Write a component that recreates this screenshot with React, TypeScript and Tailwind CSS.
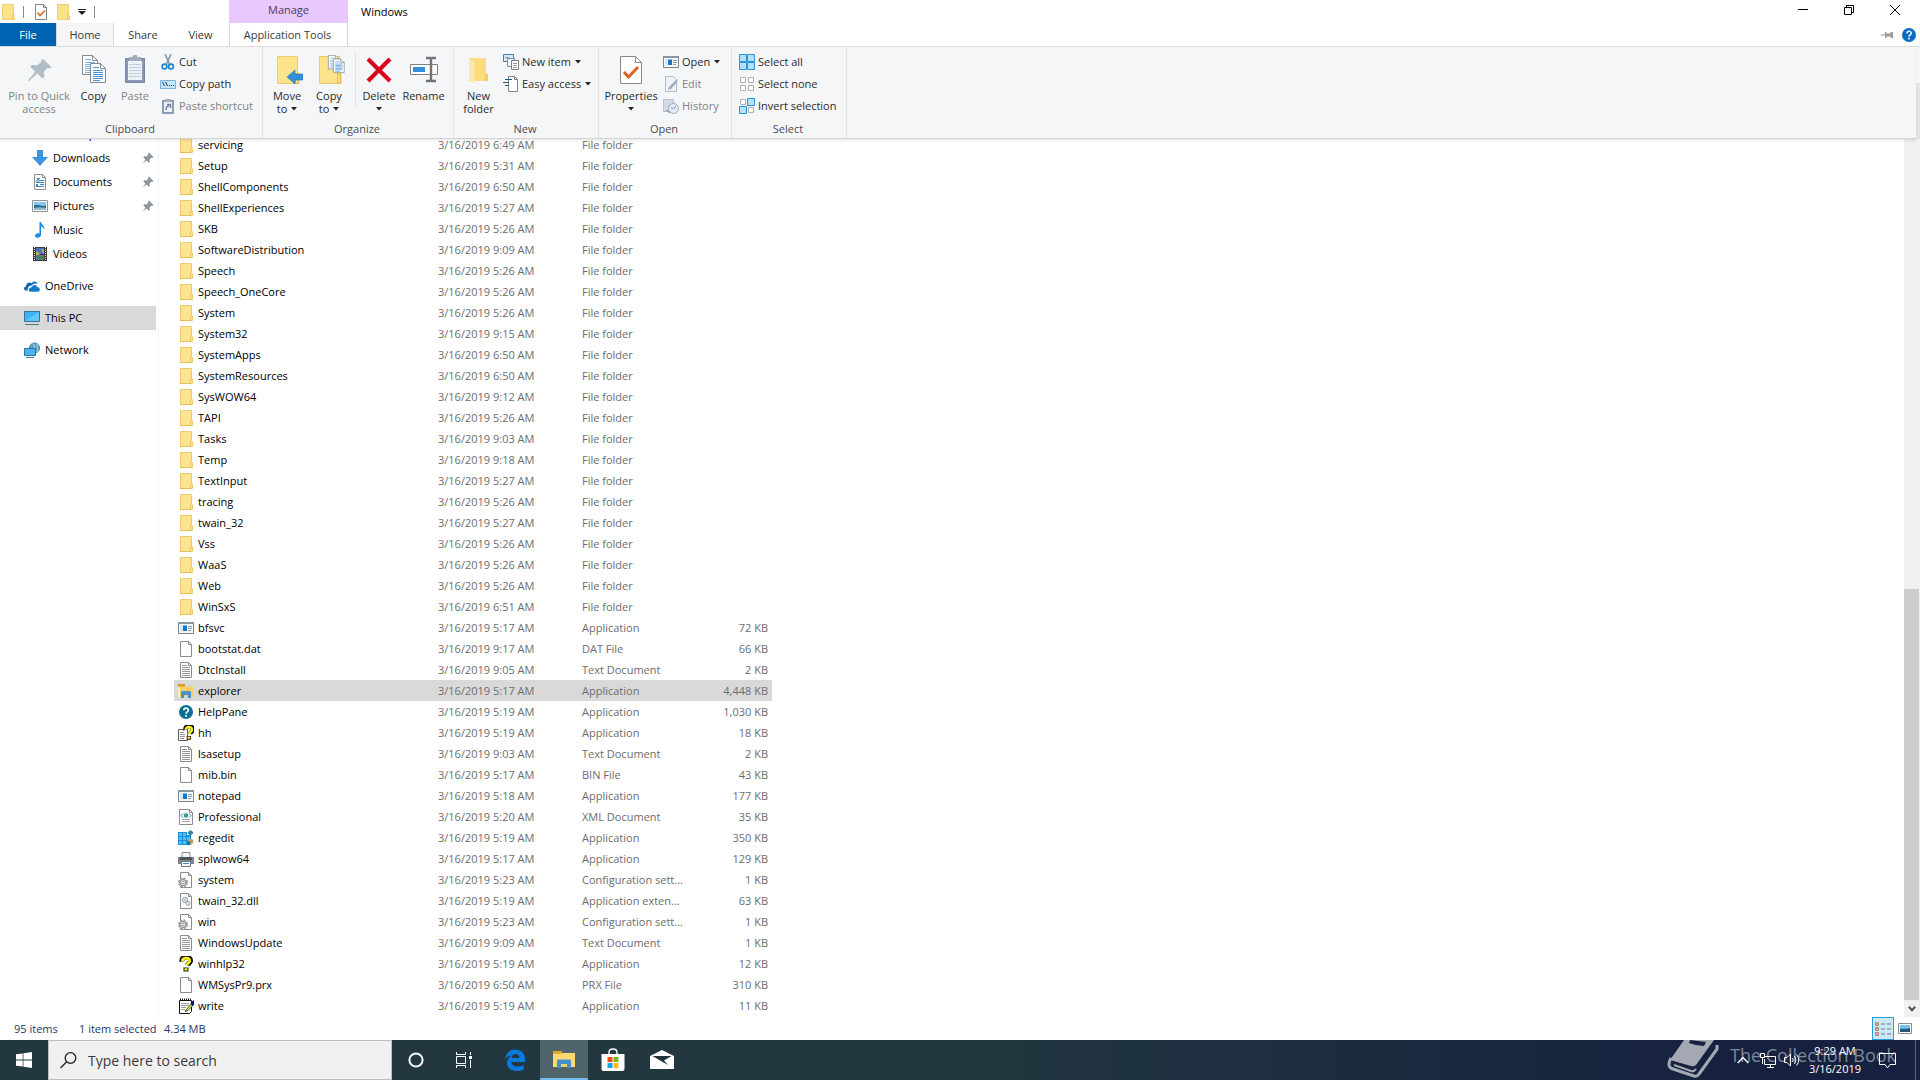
import type { ReactNode } from "react";
import clsx from "clsx";

type IconName =
  | "folder"
  | "app"
  | "blank"
  | "text"
  | "explorer"
  | "help"
  | "hh"
  | "xml"
  | "regedit"
  | "printer"
  | "config"
  | "dll"
  | "winhlp"
  | "write";

interface FileEntry {
  name: string;
  time: string;
  type: string;
  size?: string;
  icon: IconName;
  selected?: boolean;
}

const folder = (name: string, time: string): FileEntry => ({
  name,
  time,
  type: "File folder",
  icon: "folder",
});

const files: FileEntry[] = [
  folder("servicing", "6:49"),
  folder("Setup", "5:31"),
  folder("ShellComponents", "6:50"),
  folder("ShellExperiences", "5:27"),
  folder("SKB", "5:26"),
  folder("SoftwareDistribution", "9:09"),
  folder("Speech", "5:26"),
  folder("Speech_OneCore", "5:26"),
  folder("System", "5:26"),
  folder("System32", "9:15"),
  folder("SystemApps", "6:50"),
  folder("SystemResources", "6:50"),
  folder("SysWOW64", "9:12"),
  folder("TAPI", "5:26"),
  folder("Tasks", "9:03"),
  folder("Temp", "9:18"),
  folder("TextInput", "5:27"),
  folder("tracing", "5:26"),
  folder("twain_32", "5:27"),
  folder("Vss", "5:26"),
  folder("WaaS", "5:26"),
  folder("Web", "5:26"),
  folder("WinSxS", "6:51"),
  { name: "bfsvc", time: "5:17", type: "Application", size: "72 KB", icon: "app" },
  { name: "bootstat.dat", time: "9:17", type: "DAT File", size: "66 KB", icon: "blank" },
  { name: "DtcInstall", time: "9:05", type: "Text Document", size: "2 KB", icon: "text" },
  { name: "explorer", time: "5:17", type: "Application", size: "4,448 KB", icon: "explorer", selected: true },
  { name: "HelpPane", time: "5:19", type: "Application", size: "1,030 KB", icon: "help" },
  { name: "hh", time: "5:19", type: "Application", size: "18 KB", icon: "hh" },
  { name: "lsasetup", time: "9:03", type: "Text Document", size: "2 KB", icon: "text" },
  { name: "mib.bin", time: "5:17", type: "BIN File", size: "43 KB", icon: "blank" },
  { name: "notepad", time: "5:18", type: "Application", size: "177 KB", icon: "app" },
  { name: "Professional", time: "5:20", type: "XML Document", size: "35 KB", icon: "xml" },
  { name: "regedit", time: "5:19", type: "Application", size: "350 KB", icon: "regedit" },
  { name: "splwow64", time: "5:17", type: "Application", size: "129 KB", icon: "printer" },
  { name: "system", time: "5:23", type: "Configuration sett...", size: "1 KB", icon: "config" },
  { name: "twain_32.dll", time: "5:19", type: "Application exten...", size: "63 KB", icon: "dll" },
  { name: "win", time: "5:23", type: "Configuration sett...", size: "1 KB", icon: "config" },
  { name: "WindowsUpdate", time: "9:09", type: "Text Document", size: "1 KB", icon: "text" },
  { name: "winhlp32", time: "5:19", type: "Application", size: "12 KB", icon: "winhlp" },
  { name: "WMSysPr9.prx", time: "6:50", type: "PRX File", size: "310 KB", icon: "blank" },
  { name: "write", time: "5:19", type: "Application", size: "11 KB", icon: "write" },
];

const Svg = ({ size = 16, children }: { size?: number; children: ReactNode }) => (
  <svg
    width={size}
    height={size}
    viewBox={`0 0 ${size} ${size}`}
    fill="none"
    className="block shrink-0"
    aria-hidden="true"
  >
    {children}
  </svg>
);

/* ---------- file icons ---------- */

const PagePaths = () => (
  <>
    <path d="M2.5.5h8l3 3v12h-11z" fill="#fdfdfd" stroke="#8c8c8c" />
    <path d="M10.500.5v3h3" stroke="#8c8c8c" />
  </>
);

const GearPaths = ({ x, y }: { x: number; y: number }) => (
  <g transform={`translate(${x} ${y})`}>
    <circle r="4" stroke="#9b9b9b" strokeWidth="2" strokeDasharray="2 1.14" fill="#ececec" />
    <circle r="3" stroke="#8a8a8a" fill="#e6e6e6" />
    <circle r="1.2" fill="#fff" stroke="#8a8a8a" strokeWidth=".7" />
  </g>
);

const QuestionPaths = () => (
  <>
    <path
      d="M4 5.500C3.500 2.500 5.500 1.200 8.200 1.200c3 0 4.600 1.500 4.300 3.900-.2 2-2.500 2.300-3 4.200"
      stroke="#111"
      strokeWidth="5"
    />
    <path d="M5.500 11.500h5v4h-5z" fill="#111" />
    <path
      d="M4.400 5.200C4.200 3.200 5.800 2.200 8.200 2.200c2.400 0 3.700 1 3.500 2.900-.2 1.900-2.900 2-3.200 4.600"
      stroke="#f7ef1c"
      strokeWidth="2.800"
    />
    <path d="M6.500 12.200h3v2.400h-3z" fill="#f7ef1c" />
  </>
);

const FileIcon = ({ name }: { name: IconName }) => {
  switch (name) {
    case "folder":
      return (
        <Svg>
          <path d="M2.500.5h11V10l1 1v4.500h-12z" fill="#fde492" stroke="#eccb6c" />
          <path d="M12.500 15v-4.500l1-1" stroke="#e9c560" />
          <path d="M2 15.500h12" stroke="#e8c053" />
        </Svg>
      );
    case "app":
      return (
        <Svg>
          <path d="M.5 2.500h15v11H.5z" fill="#f7fafc" stroke="#7b868e" />
          <path d="M0 2h16v2H0z" fill="#8b959c" />
          <path d="M2 5h2.500v7H2z" fill="#d5e6f2" />
          <path d="M5 5.500h4v5.500H5z" fill="#1675c4" />
          <path d="M10 6.500h4M10 8.500h4M10 10.500h3" stroke="#8e9aa2" />
        </Svg>
      );
    case "blank":
      return (
        <Svg>
          <PagePaths />
        </Svg>
      );
    case "text":
      return (
        <Svg>
          <PagePaths />
          <path d="M4 3.500h5M4 5.500h8M4 7.500h8M4 9.500h8M4 11.500h8M4 13.500h8" stroke="#979797" />
        </Svg>
      );
    case "explorer":
      return (
        <Svg>
          <path d="M1 2h6l1 1.500h7.500V14H1z" fill="#f9d065" />
          <path d="M0 1h7v2.500H0z" fill="#e19a1b" />
          <path d="M3 15V9.500Q3 8 4.500 8h7Q13 8 13 9.500V15h-3v-3H6v3z" fill="#4a93c9" />
          <path d="M0 4.500h2V14H0z" fill="#fff0c0" />
        </Svg>
      );
    case "help":
      return (
        <Svg>
          <circle cx="8" cy="8" r="7" fill="#0f6f91" />
          <path d="M5.800 6.300c0-3 4.600-3 4.600-.2C10.400 8 8 7.800 8 9.800" stroke="#fff" strokeWidth="1.600" />
          <path d="M7.200 11h1.700v1.700H7.200z" fill="#fff" />
        </Svg>
      );
    case "hh":
      return (
        <Svg>
          <path d="M.5 4.500h9v11h-9z" fill="#fff" stroke="#5b5b5b" />
          <path d="M2 7.500h4M2 9.500h5M2 11.500h5M2 13.500h4" stroke="#999" />
          <g transform="translate(4 0) scale(.85 .95)">
            <QuestionPaths />
          </g>
        </Svg>
      );
    case "xml":
      return (
        <Svg>
          <path d="M1.500.5h10l3 3v12h-13z" fill="#fdfdfd" stroke="#8c8c8c" />
          <path d="M11.500.5v3h3" stroke="#8c8c8c" />
          <path d="M5 4.500 3 6.500l2 2M11 4.500l2 2-2 2" stroke="#3f7fa8" />
          <circle cx="8" cy="6.500" r="2.200" fill="#2f9e9b" />
          <path d="M4 10.500h8M4 12.500h8" stroke="#a5a5a5" />
        </Svg>
      );
    case "regedit":
      return (
        <Svg>
          <path d="M0 2h9v3h4v10H0z" fill="#1b8fd6" />
          <path d="M1 3h3v3H1zM1 7h3v3H1zM1 11h3v3H1zM5 3h3v3H5zM5 7h3v3H5zM5 11h3v3H5zM9 7h3v3H9z" fill="#4fc0f2" />
          <path d="m12.500.5 2.700 2.200-2.700 2.600-2.700-2.600z" fill="#2e83b4" stroke="#1b6fa0" strokeWidth=".7" />
          <circle cx="12.500" cy="11.500" r="2.800" fill="#b99b60" />
          <path d="M9 11.500h3V15H9z" fill="#1472b1" />
        </Svg>
      );
    case "printer":
      return (
        <Svg>
          <path d="M4 1.500h8v5H4z" fill="#f4f6f7" stroke="#8a9196" />
          <path d="M0 6h16v7H0z" fill="#7d858b" />
          <path d="M2 6h12v3H2z" fill="#4f575d" />
          <path d="M3.500 10.500h9v5h-9z" fill="#f5f8fa" stroke="#737b80" />
          <path d="M5 12.500h6" stroke="#3c90cd" />
        </Svg>
      );
    case "config":
      return (
        <Svg>
          <PagePaths />
          <GearPaths x={5} y={10.5} />
        </Svg>
      );
    case "dll":
      return (
        <Svg>
          <PagePaths />
          <circle cx="7" cy="7" r="2.600" stroke="#96a3aa" fill="#e4eaed" />
          <circle cx="7" cy="7" r=".8" fill="#96a3aa" />
          <circle cx="10" cy="10.500" r="2" stroke="#96a3aa" fill="#e4eaed" />
        </Svg>
      );
    case "winhlp":
      return (
        <Svg>
          <QuestionPaths />
        </Svg>
      );
    case "write":
      return (
        <Svg>
          <path d="M1.500 2.500h12v11l-2 2h-10z" fill="#fff" stroke="#111" />
          <path d="M2 1.500h12" stroke="#111" strokeWidth="2" strokeDasharray="1 1" />
          <path d="M3 5.500h8M3 7.500h8M3 9.500h5M3 11.500h4" stroke="#9a9a9a" />
          <path d="m8 12 5-6 2 1.500-5 5-3 1z" fill="#efe53c" stroke="#111" strokeWidth=".7" />
          <path d="M12.500 4.500 16 2v5l-2 1z" fill="#14107c" />
        </Svg>
      );
  }
};

/* ---------- navigation icons ---------- */

const PinIcon = () => (
  <svg width="12" height="12" viewBox="0 0 12 12" className="block shrink-0" aria-hidden="true">
    <path
      d="M7 .6 11.400 5l-1 .9-.8-.3-2 2 .2 2.200-1.100 1L4.500 8.600.6 11.500 3.400 7.500 1.200 5.300l1-1.100 2.200.2 2-2-.3-.8z"
      fill="#8d979e"
    />
  </svg>
);

const navIcons: Record<string, ReactNode> = {
  Desktop: (
    <Svg>
      <path d="M0 2h16v11H0z" fill="#1f8dd6" />
    </Svg>
  ),
  Downloads: (
    <Svg>
      <path d="M5 0h6v7h5l-8 9-8-9h5z" fill="#3b94dd" />
    </Svg>
  ),
  Documents: (
    <Svg>
      <PagePaths />
      <path d="M5 4.500h3M7 6.500h5M4 8.500h8M4 10.500h2M8 10.500h4M4 12.500h8" stroke="#3583bd" />
      <path d="M4 7.500 6 5v3M4 11.500h2" stroke="#3583bd" />
    </Svg>
  ),
  Pictures: (
    <Svg>
      <path d="M.5 2.500h15v11H.5z" fill="#fff" stroke="#8c979d" />
      <path d="M2 4h12v8H2z" fill="#86c8ee" />
      <path d="M2 7.500c3-1.500 5 1 12 0V12H2z" fill="#2c6a8c" />
      <path d="M2 10c4-1.500 8-.5 12 0v2H2z" fill="#8fb9cc" />
    </Svg>
  ),
  Music: (
    <Svg>
      <path
        d="M7.500 0h1.500c.5 3 4 3.500 3.500 8-.5-2-1.500-3-3.500-3.500V13c0 3-5.500 4-6 1-.2-2 2-3.200 4.500-2.600z"
        fill="#1b8ce0"
      />
    </Svg>
  ),
  Videos: (
    <Svg>
      <path d="M1 1h14v14H1z" fill="#3a3a3a" />
      <path d="M2.500 1v14M13.500 1v14" stroke="#e5e5e5" strokeDasharray="1 1" />
      <path d="M4 2h8v6H4z" fill="#4b78b8" />
      <path d="M4 5l4 3-4 2zM9 3l3 1v4z" fill="#d8b53c" />
      <path d="M4 9h8v5H4z" fill="#6a6fae" />
      <path d="M6 10h5v3H6z" fill="#2f8b52" />
    </Svg>
  ),
  OneDrive: (
    <Svg>
      <path
        d="M3.800 12.500H1.700C-.8 12.100-.4 8.500 2 8.400 2 5.200 5.500 3.500 7.800 5.300 9.500 2.500 13 3.500 13.400 6 10.500 4.800 8.500 6 8 7.600 5 7.500 3.300 9.700 3.800 12.500z"
        fill="#0f65b8"
      />
      <path d="M6.300 13.800C4 13.300 4.200 9.300 7.800 9.200 8.500 6.300 12.500 6.200 13.200 9c3.200.2 3.500 4.200.8 4.800z" fill="#1379cf" />
    </Svg>
  ),
  "This PC": (
    <Svg>
      <path d="M.5 1.500h15v10H.5z" fill="#3db1f5" stroke="#38738f" />
      <path d="m1 11 14-9v9z" fill="#63c6fb" />
      <path d="M1 14.500h14" stroke="#50788c" />
    </Svg>
  ),
  Network: (
    <Svg>
      <circle cx="10.500" cy="6" r="5" fill="#5fa5c8" stroke="#3f7fa2" />
      <path d="M9 1.500c2 2 2 3 1 5M13 2c1 3 1 5 0 8" stroke="#a9d3e8" />
      <path d="M.5 6.500h11v7H.5z" fill="#49b4ef" stroke="#2c739b" />
      <path d="M2 15.500h8" stroke="#4f7d96" />
    </Svg>
  ),
};

interface NavItem {
  label: string;
  pinned?: boolean;
  current?: boolean;
}

const quickAccess: NavItem[] = [
  { label: "Desktop", pinned: true },
  { label: "Downloads", pinned: true },
  { label: "Documents", pinned: true },
  { label: "Pictures", pinned: true },
  { label: "Music" },
  { label: "Videos" },
];

const roots: NavItem[] = [{ label: "OneDrive" }, { label: "This PC", current: true }, { label: "Network" }];

const NavLink = ({ item, nested }: { item: NavItem; nested?: boolean }) => (
  <a
    href={`#${item.label.replace(" ", "-")}`}
    aria-current={item.current ? "page" : undefined}
    className={clsx(
      "flex h-6 items-center gap-[5px] pr-[2px]",
      nested ? "pl-8" : "pl-6",
      item.current && "bg-[#d9d9d9]"
    )}
  >
    {navIcons[item.label]}
    <span className="flex-1">{item.label}</span>
    {item.pinned && <PinIcon />}
  </a>
);

/* ---------- ribbon ---------- */

const Caret = () => (
  <svg width="6" height="4" viewBox="0 0 6 4" className="block shrink-0" aria-hidden="true">
    <path d="M0 0h6L3 3.500z" fill="#222" />
  </svg>
);

const LargeButton = ({
  icon,
  lines,
  caret,
  disabled,
  width,
}: {
  icon: ReactNode;
  lines: string[];
  caret?: boolean;
  disabled?: boolean;
  width: string;
}) => (
  <button
    type="button"
    disabled={disabled}
    className={clsx(
      "flex shrink-0 flex-col items-center pt-1 leading-[13px]",
      width,
      disabled ? "text-[#7f8387]" : "text-[#2b2b2b]"
    )}
  >
    {icon}
    <span className="mt-[2px] whitespace-nowrap">{lines[0]}</span>
    <span className="flex h-[13px] items-center gap-1 whitespace-nowrap">
      {lines[1]}
      {caret && <Caret />}
    </span>
  </button>
);

const SmallButton = ({
  icon,
  label,
  caret,
  disabled,
}: {
  icon: ReactNode;
  label: string;
  caret?: boolean;
  disabled?: boolean;
}) => (
  <button
    type="button"
    disabled={disabled}
    className={clsx(
      "flex h-[22px] items-center gap-[3px] whitespace-nowrap",
      disabled ? "text-[#7f8387]" : "text-[#2b2b2b]"
    )}
  >
    {icon}
    <span>{label}</span>
    {caret && (
      <span className="pl-px">
        <Caret />
      </span>
    )}
  </button>
);

const Group = ({ label, width, children }: { label: string; width: string; children: ReactNode }) => (
  <section
    aria-label={label}
    className={clsx("flex h-[91px] shrink-0 flex-col border-r border-[#e2e3e4] pt-1", width)}
  >
    <div className="flex h-[68px]">{children}</div>
    <div className="pr-[2px] text-center leading-[19px] text-[#4a4d50]">{label}</div>
  </section>
);

const BigPage = ({ x, y, color }: { x: number; y: number; color: string }) => (
  <g transform={`translate(${x} ${y})`}>
    <path d="M.5.5h10l5 5v14H.5z" fill="#fff" stroke="#85898c" />
    <path d="M10.500.5v5h5" stroke="#85898c" />
    <path d="M3 4.500h6M3 7.500h10M3 9.500h10M3 11.500h10M3 13.500h10M3 15.500h10M3 17.500h7" stroke={color} />
  </g>
);

const BigFolder = () => (
  <>
    <path d="M6.500 1.500h20V18l1.500.5v10H6.500z" fill="#fde38c" stroke="#edcb66" />
    <path d="M24.500 18.500h3v10h-3z" fill="#fbdc78" stroke="#e2bc52" />
  </>
);

const Ribbon = () => (
  <div className="flex h-[93px] shrink-0 border-t border-[#dadbdc] bg-white">
    <div className="z-10 flex flex-1 border-b border-[#d2d3d4] bg-[#f5f6f7] shadow-[0_2px_2px_rgba(0,0,0,0.08)]">
      <Group label="Clipboard" width="w-[263px]">
        <div className="flex pl-1">
          <LargeButton
            width="w-[70px]"
            disabled
            lines={["Pin to Quick", "access"]}
            icon={
              <Svg size={32}>
                <path
                  d="m20 4 8.500 8-2 1.500-1.800-.8-4 4 .8 5-2.200 1.800-5-5L6 26l-1-.5 7.200-8.800-5-5 1.800-1.800 5 .4 4.600-3.600-.6-1.500z"
                  fill="#b1bdc7"
                />
              </Svg>
            }
          />
          <LargeButton
            width="w-[39px]"
            lines={["Copy"]}
            icon={
              <Svg size={32}>
                <BigPage x={4} y={0} color="#7fb3e0" />
                <BigPage x={12} y={8} color="#4a92d4" />
              </Svg>
            }
          />
          <LargeButton
            width="w-[44px]"
            disabled
            lines={["Paste"]}
            icon={
              <Svg size={32}>
                <path d="M6.500 3.500h19v24h-19z" fill="#8797b4" stroke="#7585a5" />
                <path d="M9 6h14v19H9z" fill="#eef1f6" />
                <path d="M10 9.500h12M10 12.500h12M10 15.500h12M10 18.500h12M10 21.500h12" stroke="#c3ccda" />
                <path d="M10 2h3.500c0-3 5-3 5 0H22v4H10z" fill="#a4aebb" />
              </Svg>
            }
          />
        </div>
        <div className="flex flex-col pl-[3px]">
          <SmallButton
            label="Cut"
            icon={
              <Svg>
                <path d="M5 0 9.500 10M11 0 6.500 10" stroke="#8296a6" strokeWidth="1.600" />
                <circle cx="4.500" cy="12.500" r="2.400" stroke="#1e84c9" strokeWidth="1.600" />
                <circle cx="11" cy="12.500" r="2.400" stroke="#1e84c9" strokeWidth="1.600" />
              </Svg>
            }
          />
          <SmallButton
            label="Copy path"
            icon={
              <Svg>
                <path d="M.5 4.500h15v8H.5z" fill="#c8e5f8" stroke="#7ab4dc" />
                <path d="m2.500 6 2 4M5.500 6l2 4" stroke="#173f66" />
                <path d="M9 9.500h1M11 9.500h1M13 9.500h1" stroke="#173f66" />
              </Svg>
            }
          />
          <SmallButton
            label="Paste shortcut"
            disabled
            icon={
              <Svg>
                <path d="M2 2h12v14H2z" fill="#8d9cb8" />
                <path d="M4 4h8v10H4z" fill="#eef1f6" />
                <path d="M5 1h6v3H5z" fill="#a4aebb" />
                <path d="M6 12c0-3 1-4 3-4M7 6.500h3.500V10" stroke="#6c7fa3" strokeWidth="1.400" />
              </Svg>
            }
          />
        </div>
      </Group>

      <Group label="Organize" width="w-[191px]">
        <div className="flex pl-[3px]">
          <LargeButton
            width="w-[42px]"
            lines={["Move", "to"]}
            caret
            icon={
              <Svg size={32}>
                <BigFolder />
                <path d="m16 22 8-7v4h8v6h-8v4z" fill="#338fdc" stroke="#2676ba" strokeWidth=".6" />
              </Svg>
            }
          />
          <LargeButton
            width="w-[42px]"
            lines={["Copy", "to"]}
            caret
            icon={
              <Svg size={32}>
                <BigFolder />
                <g transform="translate(15 0) scale(.72 .72)">
                  <BigPage x={0} y={0} color="#7fb3e0" />
                  <BigPage x={7} y={5} color="#4a92d4" />
                </g>
              </Svg>
            }
          />
        </div>
        <div className="ml-[5px] h-14 border-l border-[#e2e3e4]" />
        <LargeButton
          width="w-[46px]"
          lines={["Delete"]}
          caret
          icon={
            <Svg size={32}>
              <path d="M5 4 27 26M27 4 5 26" stroke="#d9071c" strokeWidth="4.200" />
            </Svg>
          }
        />
        <LargeButton
          width="w-[43px]"
          lines={["Rename"]}
          icon={
            <Svg size={32}>
              <path d="M2.500 9.500h27v10h-27z" fill="#fff" stroke="#7c8184" />
              <path d="M5 12h12v5H5z" fill="#2f8fdc" />
              <path d="M18 3h4l1 1 1-1h4M18 26h4l1-1 1 1h4M23 4v21" stroke="#6f7477" strokeWidth="2.400" />
            </Svg>
          }
        />
      </Group>

      <Group label="New" width="w-[145px]">
        <LargeButton
          width="w-[49px]"
          lines={["New", "folder"]}
          icon={
            <Svg size={32}>
              <path d="M6 3h17v23H6z" fill="#fbdc7e" />
              <path d="m6 3 5.500 4.500V29L6 24.500z" fill="#fdeaab" />
              <path d="M22 19h3v7h-3z" fill="#f4cd62" />
            </Svg>
          }
        />
        <div className="flex flex-col">
          <SmallButton
            label="New item"
            caret
            icon={
              <Svg>
                <path d="M.5.5h10v7H.5z" fill="#d7eaf8" stroke="#4b7fa8" />
                <path d="M4.500 4.500h7v8h-7z" fill="#f3f6f8" stroke="#6b90ae" />
                <path d="M8.500 6.500h7v9h-7z" fill="#fff" stroke="#7c8286" />
                <path d="M10 9.500h4M10 11.500h4M10 13.500h4M2 3.500h4" stroke="#8e979d" />
              </Svg>
            }
          />
          <SmallButton
            label="Easy access"
            caret
            icon={
              <Svg>
                <path d="M5.500.5h6l3 3v12h-9z" fill="#fff" stroke="#7f8487" />
                <path d="M11.500.5v3h3" stroke="#7f8487" />
                <path d="M2 3.500h7M0 6.500h6M2 9.500h4" stroke="#24567f" />
              </Svg>
            }
          />
        </div>
      </Group>

      <Group label="Open" width="w-[133px]">
        <LargeButton
          width="w-[64px]"
          lines={["Properties"]}
          caret
          icon={
            <Svg size={32}>
              <path d="M5.500 1.500h15l6 6v21h-21z" fill="#fff" stroke="#85898c" />
              <path d="M20.500 1.500v6h6" stroke="#85898c" />
              <path d="m9 17 4.500 5L23 12" stroke="#dd6423" strokeWidth="3" />
            </Svg>
          }
        />
        <div className="flex flex-col">
          <SmallButton label="Open" caret icon={<FileIcon name="app" />} />
          <SmallButton
            label="Edit"
            disabled
            icon={
              <Svg>
                <path d="M2.500.5h8l3 3v12h-11z" fill="#eef1f7" stroke="#b0b9cb" />
                <path d="m5 14 1-3 7.500-7.500 1.500 1.500L8 13z" fill="#9dabc6" />
              </Svg>
            }
          />
          <SmallButton
            label="History"
            disabled
            icon={
              <Svg>
                <path d="M.5 1.500h10v12H.5z" fill="#d3d9e6" stroke="#b9c2d4" />
                <circle cx="10.500" cy="10.500" r="5" fill="#e6eaf2" stroke="#9aa8c3" />
                <path d="M8 9.500 10.500 11 13 8M3 12l4 3" stroke="#8493b3" />
              </Svg>
            }
          />
        </div>
      </Group>

      <Group label="Select" width="w-[115px]">
        <div className="flex flex-col pl-[7px]">
          <SmallButton
            label="Select all"
            icon={
              <Svg>
                <path
                  d="M.5.5h7v7h-7zM8.500.5h7v7h-7zM.5 8.500h7v7h-7zM8.500 8.500h7v7h-7z"
                  fill="#b5e0fb"
                  stroke="#2d8fd5"
                />
              </Svg>
            }
          />
          <SmallButton
            label="Select none"
            icon={
              <Svg>
                <path
                  d="M1.500 1.500h5v5h-5zM9.500 1.500h5v5h-5zM1.500 9.500h5v5h-5zM9.500 9.500h5v5h-5z"
                  fill="#fff"
                  stroke="#aeb1b3"
                />
              </Svg>
            }
          />
          <SmallButton
            label="Invert selection"
            icon={
              <Svg>
                <path d="M1.500 1.500h5v5h-5zM9.500 9.500h5v5h-5z" fill="#fff" stroke="#aeb1b3" />
                <path d="M8.500.5h7v7h-7zM.5 8.500h7v7h-7z" fill="#b5e0fb" stroke="#2d8fd5" />
              </Svg>
            }
          />
        </div>
      </Group>
    </div>
    <div className="flex w-1 flex-col">
      <div className="h-9 bg-[#f7f7f7]" />
      <div className="flex-1 bg-[#e4e4e4]" />
    </div>
  </div>
);

const QuickFolder = () => (
  <svg width="13" height="16" viewBox="0 0 13 16" className="block shrink-0" aria-hidden="true">
    <path d="M.5.5h11v10l1 .8v4.200H.5z" fill="#fde28a" stroke="#f0cf70" />
    <path d="M10.500 15v-4.500l1-1" fill="none" stroke="#e8c45c" />
  </svg>
);

const TitleBar = () => (
  <header className="flex h-[23px] shrink-0 pr-[2px]">
    <div className="flex w-[229px] items-center pl-[2px]">
      <QuickFolder />
      <div className="ml-2 h-3 w-px bg-[#8b8b8b]" />
      <button type="button" aria-label="Properties" className="ml-[9px]">
        <Svg>
          <path d="M2.500.5h8l3 3v12h-11z" fill="#fff" stroke="#7f8487" />
          <path d="M10.500.5v3h3" stroke="#7f8487" />
          <path d="m4.500 8.500 2.500 3 5-5" stroke="#dd6423" strokeWidth="1.600" />
        </Svg>
      </button>
      <button type="button" aria-label="New folder" className="ml-2">
        <QuickFolder />
      </button>
      <button type="button" aria-label="Customize Quick Access Toolbar" className="ml-2">
        <svg width="8" height="6" viewBox="0 0 8 6" className="block" aria-hidden="true">
          <path d="M0 .5h8" stroke="#222" />
          <path d="M0 2h8L4 6z" fill="#222" />
        </svg>
      </button>
      <div className="ml-2 h-3 w-px bg-[#8b8b8b]" />
    </div>
    <div className="w-[119px] bg-[#e8c8fd] text-center leading-[20px] text-[#4d3c58]">Manage</div>
    <h1 className="flex-1 pl-[13px] text-[11px] leading-[24px] text-black">Windows</h1>
    <button type="button" aria-label="Minimize" className="flex h-5 w-[46px] items-center justify-center">
      <Svg size={10}>
        <path d="M0 4.500h10" stroke="#000" />
      </Svg>
    </button>
    <button type="button" aria-label="Restore" className="flex h-5 w-[46px] items-center justify-center">
      <Svg size={10}>
        <path d="M.5 2.500h7v7h-7z" stroke="#000" />
        <path d="M2.500 2V.5h7v7H8" stroke="#000" />
      </Svg>
    </button>
    <button type="button" aria-label="Close" className="flex h-5 w-[46px] items-center justify-center">
      <Svg size={10}>
        <path d="m0 0 10 10M10 0 0 10" stroke="#000" />
      </Svg>
    </button>
  </header>
);

const TabBar = () => (
  <nav aria-label="Ribbon tabs" className="flex h-[23px] shrink-0 items-stretch text-[#3b3b3b]">
    <button type="button" className="w-14 bg-[#0063b1] text-white">
      File
    </button>
    <button type="button" className="-mb-px w-[58px] border-x border-[#dadbdc] bg-[#f5f6f7]">
      Home
    </button>
    <button type="button" className="w-[58px]">
      Share
    </button>
    <button type="button" className="w-[57px]">
      View
    </button>
    <button type="button" className="w-[119px] border-x border-[#ddd0e6] pr-[2px]">
      Application Tools
    </button>
    <div className="flex flex-1 items-center justify-end gap-[9px] pr-1">
      <button type="button" aria-label="Pin the ribbon">
        <svg width="12" height="8" viewBox="0 0 12 8" className="block" aria-hidden="true">
          <path d="M0 4h4" stroke="#999" />
          <path d="M4 1h1.500v1.500h4V1H12v6H9.500V5.500h-4V7H4z" fill="#999" />
        </svg>
      </button>
      <button type="button" aria-label="Help">
        <Svg size={14}>
          <circle cx="7" cy="7" r="7" fill="#0a6cc4" />
          <path d="M5 5.400c0-2.800 4.200-2.800 4.200-.2C9.200 7 7 6.800 7 8.800" stroke="#fff" strokeWidth="1.500" />
          <path d="M6.200 9.800h1.600v1.600H6.200z" fill="#fff" />
        </Svg>
      </button>
    </div>
  </nav>
);

const FileList = () => (
  <table className="-mt-[5px] w-[598px] table-fixed border-collapse text-left text-[#6d6d6d]">
    <colgroup>
      <col className="w-[24px]" />
      <col className="w-[240px]" />
      <col className="w-[144px]" />
      <col className="w-[112px]" />
      <col className="w-[78px]" />
    </colgroup>
    <tbody>
      {files.map((file) => (
        <tr
          key={file.name}
          aria-selected={file.selected}
          className={clsx("h-[21px]", file.selected && "bg-[#d9d9d9]")}
        >
          <td className="p-0 pl-1">
            <FileIcon name={file.icon} />
          </td>
          <td className="p-0 text-black">{file.name}</td>
          <td className="p-0">3/16/2019 {file.time} AM</td>
          <td className="p-0 whitespace-nowrap">{file.type}</td>
          <td className="p-0 pr-1 text-right">{file.size}</td>
        </tr>
      ))}
    </tbody>
  </table>
);

const ScrollBar = () => (
  <div className="flex w-4 shrink-0 flex-col bg-[#f0f0f0] pr-px">
    <div className="flex-[450]" />
    <div className="flex-[411] bg-[#cdcdcd]" />
    <button type="button" aria-label="Scroll down" className="flex h-[17px] items-center justify-center">
      <svg width="8" height="6" viewBox="0 0 8 6" fill="none" className="block" aria-hidden="true">
        <path d="m.8.8 3.200 3.400L7.200.8" stroke="#505050" strokeWidth="2" />
      </svg>
    </button>
  </div>
);

const StatusBar = () => (
  <footer className="flex h-[23px] shrink-0 items-center pl-[14px] text-[#1e3566]">
    <span className="w-[65px]">95 items</span>
    <span className="w-[85px] whitespace-nowrap">1 item selected</span>
    <span className="flex-1">4.34 MB</span>
    <button
      type="button"
      aria-label="Details view"
      className="flex h-[23px] w-[22px] items-center justify-center border border-[#26a0da] bg-[#cce8f6]"
    >
      <Svg>
        <path d="M.5 1.500h3v3h-3zM.5 6.500h3v3h-3zM.5 11.500h3v3h-3z" fill="#fff" stroke="#a58a8a" />
        <path d="M1 3h2M1 8h2M1 13h2" stroke="#b5443d" />
        <path d="M6 3h4M6 8h4M6 13h4M12 3h4M12 8h4M12 13h4" stroke="#6e7b84" />
      </Svg>
    </button>
    <button type="button" aria-label="Large icons view" className="mr-2 ml-1 flex h-5 items-center">
      <svg width="14" height="11" viewBox="0 0 14 11" className="block" aria-hidden="true">
        <path d="M.5.5h13v10H.5z" fill="#fff" stroke="#8c8c8c" />
        <path d="M2 2h10v7H2z" fill="#7cc0ec" />
        <path d="M2 6c4-1 6 .5 10-1v4H2z" fill="#23577a" />
      </svg>
    </button>
  </footer>
);

/* ---------- taskbar ---------- */

const TaskButton = ({ label, active, children }: { label: string; active?: boolean; children: ReactNode }) => (
  <button
    type="button"
    aria-label={label}
    className={clsx(
      "flex w-12 shrink-0 items-center justify-center",
      active && "border-b-2 border-[#76b9ed] bg-[#50646c]"
    )}
  >
    {children}
  </button>
);

const Taskbar = () => (
  <div className="relative flex h-10 shrink-0 bg-linear-to-r from-[#22373f] from-50% to-[#16213f] to-90% text-white">
    <TaskButton label="Start">
      <Svg size={16}>
        <path
          d="m0 2.300 6.700-.9v6.200H0zM7.400 1.300 16 0v7.600H7.400zM0 8.400h6.700v6.200L0 13.700zM7.400 8.400H16V16l-8.600-1.300z"
          fill="#fff"
        />
      </Svg>
    </TaskButton>
    <label className="flex w-[344px] shrink-0 items-center gap-[11px] border border-[#bcbcbc] bg-[#f0f0f0] pl-[11px] text-black">
      <Svg size={17}>
        <circle cx="10.500" cy="6" r="5.300" stroke="#222" strokeWidth="1.300" />
        <path d="M6.700 9.800.5 16" stroke="#222" strokeWidth="1.300" />
      </Svg>
      <input
        type="text"
        aria-label="Search"
        placeholder="Type here to search"
        className="min-w-0 flex-1 bg-transparent pt-[2px] text-[14px] outline-none placeholder:text-[#3a3a3a]"
      />
    </label>
    <TaskButton label="Cortana">
      <Svg size={16}>
        <circle cx="8" cy="8" r="6.600" stroke="#fff" strokeWidth="2" />
      </Svg>
    </TaskButton>
    <TaskButton label="Task View">
      <Svg size={16}>
        <path d="M.5 0v2.500h9V0M.5 16v-2.500h9V16M.5 4.500h9v7h-9zM14.500 0v3M14.500 8v8" stroke="#fff" />
        <path d="M13 4h3v3h-3z" fill="#fff" />
      </Svg>
    </TaskButton>
    <div className="flex gap-px pl-[3px]">
      <TaskButton label="Microsoft Edge">
        <Svg size={22}>
          <path
            d="M1 10C1.800 4 6 .5 11.300.5 17.500.5 21 5 21 10.500V13H7.500c.2 3.200 3 4.600 6.200 4.600 2.200 0 4.300-.6 6-1.600v4.500c-2 1-4.400 1.500-7 1.500C6.500 22 3 18.500 3 14c0-3.200 1.800-6 4.700-7.300C5 6.900 2.500 8 1 10zm6.700-1h7.600c0-2.600-1.400-4-3.700-4S8 6.700 7.700 9z"
            fill="#0a7bdc"
          />
        </Svg>
      </TaskButton>
      <TaskButton label="File Explorer" active>
        <Svg size={22}>
          <path d="M0 3h8l1 2h13v14H0z" fill="#fbd772" />
          <path d="M0 3h8l1 2-1 1H0z" fill="#e0a823" />
          <path d="M4 20v-7q0-1.500 1.500-1.500h11Q18 11.500 18 13v7h-4v-4H8v4z" fill="#4591c9" />
          <path d="M8.500 16h5v3h-5z" fill="#f6cf5e" />
        </Svg>
      </TaskButton>
      <TaskButton label="Microsoft Store">
        <Svg size={24}>
          <path d="M8 7V4.500q0-3.500 4-3.500t4 3.500V7" stroke="#fff" strokeWidth="1.400" />
          <path d="M.5 6h23v15q0 2-2 2h-19q-2 0-2-2z" fill="#fff" />
          <path d="M6.500 9h5v5h-5z" fill="#e8501f" />
          <path d="M12.500 9h5v5h-5z" fill="#7db80b" />
          <path d="M6.500 15h5v5h-5z" fill="#1a9fe8" />
          <path d="M12.500 15h5v5h-5z" fill="#fdb813" />
        </Svg>
      </TaskButton>
      <TaskButton label="Mail">
        <Svg size={24}>
          <path d="M0 8 12 2l12 6v13H0z" fill="#fff" />
          <path d="M2.500 8h19L14 12.500l4 4.500-8-4.500z" fill="#20343d" />
        </Svg>
      </TaskButton>
    </div>

    {/* brand mark lying under the tray icons */}
    <div className="pointer-events-none absolute top-0 right-6 flex gap-[11px]">
      <svg width="52" height="40" viewBox="0 0 52 40" fill="none" aria-hidden="true">
        <path d="M17 0h30L29 25q-2 2-5 1L3 20z" fill="#a4a8b2" />
        <path d="m23 0 16 2-2 4q-8 0-15-3z" fill="#19233f" />
        <path
          d="M4 18Q-1 27 6 29l21 7q3 1 5-2L50 9V5"
          stroke="#a4a8b2"
          strokeWidth="3"
          strokeLinejoin="round"
        />
        <path d="m7 25 17 6q3 1 5-2" stroke="#a4a8b2" strokeWidth="2" />
      </svg>
      <span className="text-[18px] leading-[30px] text-[#80879a]">The Collection Book</span>
    </div>

    <div className="relative ml-auto flex items-center pr-1">
      <button type="button" aria-label="Show hidden icons" className="w-[18px]">
        <svg width="12" height="8" viewBox="0 0 12 8" fill="none" className="mx-auto block" aria-hidden="true">
          <path d="m.7 7 5.300-5.500L11.300 7" stroke="#fff" strokeWidth="1.400" />
        </svg>
      </button>
      <button type="button" aria-label="Network" className="ml-2">
        <Svg size={16}>
          <path d="M5 4.500h10.500v8H4.500V7M7 15.500h7M10.500 13v2" stroke="#fff" />
          <path d="M.5 1.500h4v4h-4zM2.500 6v6" stroke="#fff" />
        </Svg>
      </button>
      <button type="button" aria-label="Volume" className="ml-2">
        <Svg size={16}>
          <path d="M.5 5.500H3L6.500 2v12L3 10.500H.5z" stroke="#fff" />
          <path d="M8.500 6q1.500 2 0 4M10.500 4q3 4 0 8M12.500 2.500q4.500 5.500 0 11" stroke="#fff" />
        </Svg>
      </button>
      <time dateTime="2019-03-16T09:29" className="w-[70px] text-center leading-[18px]">
        <span className="block">9:29 AM</span>
        <span className="block">3/16/2019</span>
      </time>
      <button type="button" aria-label="Notifications" className="flex w-[34px] justify-center">
        <Svg size={17}>
          <path d="M.5 1.500h16v11H11L8.500 16 6 12.500H.5z" stroke="#fff" />
        </Svg>
      </button>
      <div className="ml-[11px] h-10 w-px bg-[#5b657c]" />
    </div>
  </div>
);

const App = () => {
  return (
    <div className="flex h-screen flex-col overflow-hidden bg-white font-['Open_Sans','Noto_Sans',sans-serif] text-[11px] leading-4 text-black">
      <TitleBar />
      <TabBar />
      <Ribbon />
      <main className="flex min-h-0 flex-1 overflow-hidden">
        <aside className="w-[159px] shrink-0 border-r border-[#f5f5f5] pr-[2px]">
          <nav aria-label="Folders" className="-mt-[17px]">
            {quickAccess.map((item) => (
              <NavLink key={item.label} item={item} nested />
            ))}
            <div className="mt-2 flex flex-col gap-2">
              {roots.map((item) => (
                <NavLink key={item.label} item={item} />
              ))}
            </div>
          </nav>
        </aside>
        <div className="min-w-0 flex-1 pl-[15px]">
          <FileList />
        </div>
        <ScrollBar />
      </main>
      <StatusBar />
      <Taskbar />
    </div>
  );
};

export default App;
